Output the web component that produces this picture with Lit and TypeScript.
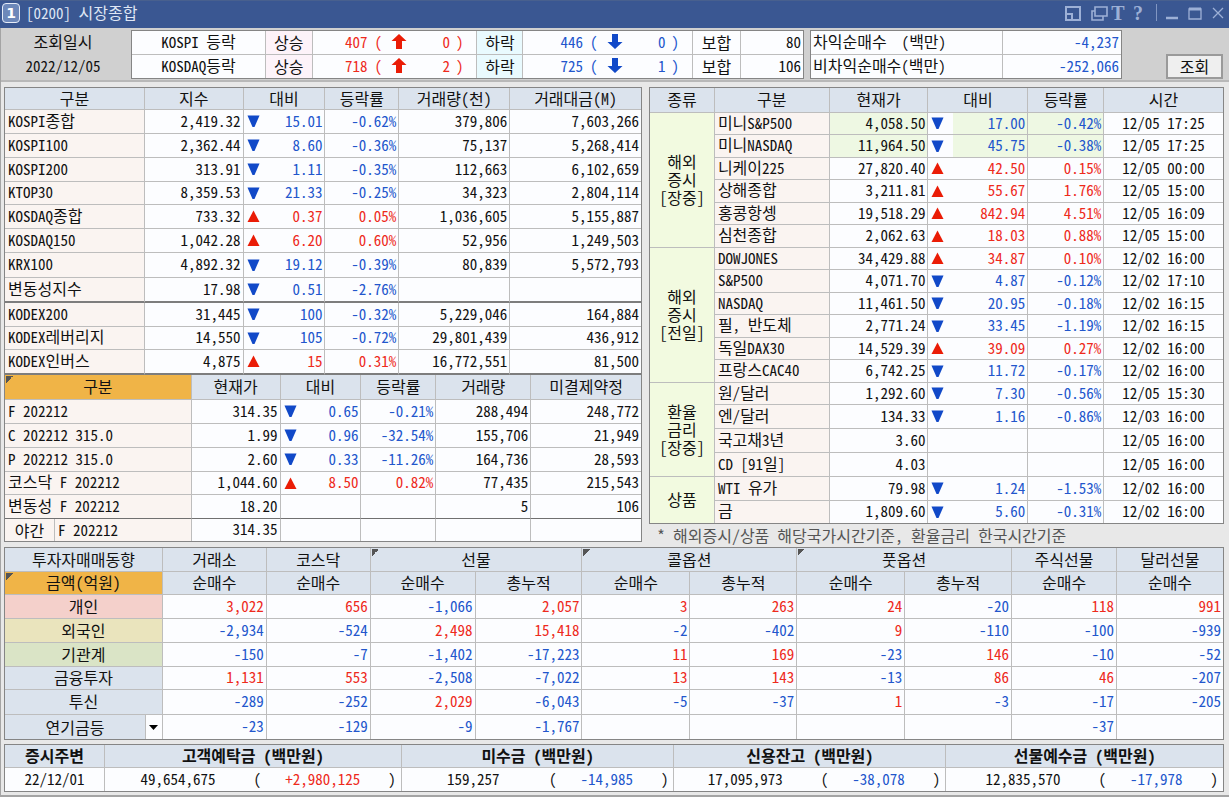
import { LitElement, html, css, svg, nothing } from "lit";
import { customElement, state } from "lit/decorators.js";

type Quote = {
  name: string;
  price: string;
  change?: string;
  rate?: string;
  dir?: "up" | "down";
  extra: string[];
  row: string;
};

const q = (
  row: string,
  name: string,
  price: string,
  dir: "" | "up" | "down",
  change: string,
  rate: string,
  ...extra: string[]
): Quote => ({ row, name, price, dir: dir || undefined, change, rate, extra });

const INDICES: Quote[] = [
  q("h24", "KOSPI종합", "2,419.32", "down", "15.01", "-0.62%", "379,806", "7,603,266"),
  q("h24", "KOSPI100", "2,362.44", "down", "8.60", "-0.36%", "75,137", "5,268,414"),
  q("h24", "KOSPI200", "313.91", "down", "1.11", "-0.35%", "112,663", "6,102,659"),
  q("h23", "KTOP30", "8,359.53", "down", "21.33", "-0.25%", "34,323", "2,804,114"),
  q("h24", "KOSDAQ종합", "733.32", "up", "0.37", "0.05%", "1,036,605", "5,155,887"),
  q("h24", "KOSDAQ150", "1,042.28", "up", "6.20", "0.60%", "52,956", "1,249,503"),
  q("h25", "KRX100", "4,892.32", "down", "19.12", "-0.39%", "80,839", "5,572,793"),
  q("h25 thick", "변동성지수", "17.98", "down", "0.51", "-2.76%", "", ""),
  q("h24", "KODEX200", "31,445", "down", "100", "-0.32%", "5,229,046", "164,884"),
  q("h23", "KODEX레버리지", "14,550", "down", "105", "-0.72%", "29,801,439", "436,912"),
  q("h25 thick", "KODEX인버스", "4,875", "up", "15", "0.31%", "16,772,551", "81,500"),
];

const FUTURES: Quote[] = [
  q("h24", "F 202212", "314.35", "down", "0.65", "-0.21%", "288,494", "248,772"),
  q("h24", "C 202212 315.0", "1.99", "down", "0.96", "-32.54%", "155,706", "21,949"),
  q("h24", "P 202212 315.0", "2.60", "down", "0.33", "-11.26%", "164,736", "28,593"),
  q("h23", "코스닥 F 202212", "1,044.60", "up", "8.50", "0.82%", "77,435", "215,543"),
  q("h24 dark", "변동성 F 202212", "18.20", "", "", "", "5", "106"),
];

const WORLD: { title: string[]; rows: Quote[] }[] = [
  {
    title: ["해외", "증시", "[장중]"],
    rows: [
      q("h22 lit", "미니S&P500", "4,058.50", "down", "17.00", "-0.42%", "12/05 17:25"),
      q("h23 lit", "미니NASDAQ", "11,964.50", "down", "45.75", "-0.38%", "12/05 17:25"),
      q("h22", "니케이225", "27,820.40", "up", "42.50", "0.15%", "12/05 00:00"),
      q("h23", "상해종합", "3,211.81", "up", "55.67", "1.76%", "12/05 15:00"),
      q("h22", "홍콩항셍", "19,518.29", "up", "842.94", "4.51%", "12/05 16:09"),
      q("h23", "심천종합", "2,062.63", "up", "18.03", "0.88%", "12/05 15:00"),
    ],
  },
  {
    title: ["해외", "증시", "[전일]"],
    rows: [
      q("h22", "DOWJONES", "34,429.88", "up", "34.87", "0.10%", "12/02 16:00"),
      q("h23", "S&P500", "4,071.70", "down", "4.87", "-0.12%", "12/02 17:10"),
      q("h22", "NASDAQ", "11,461.50", "down", "20.95", "-0.18%", "12/02 16:15"),
      q("h23", "필, 반도체", "2,771.24", "down", "33.45", "-1.19%", "12/02 16:15"),
      q("h22", "독일DAX30", "14,529.39", "up", "39.09", "0.27%", "12/02 16:00"),
      q("h23", "프랑스CAC40", "6,742.25", "down", "11.72", "-0.17%", "12/02 16:00"),
    ],
  },
  {
    title: ["환율", "금리", "[장중]"],
    rows: [
      q("h22", "원/달러", "1,292.60", "down", "7.30", "-0.56%", "12/05 15:30"),
      q("h24", "엔/달러", "134.33", "down", "1.16", "-0.86%", "12/03 16:00"),
      q("h24", "국고채3년", "3.60", "", "", "", "12/05 16:00"),
      q("h24", "CD [91일]", "4.03", "", "", "", "12/05 16:00"),
    ],
  },
  {
    title: ["상품"],
    rows: [
      q("h24", "WTI 유가", "79.98", "down", "1.24", "-1.53%", "12/02 16:00"),
      q("h22", "금", "1,809.60", "down", "5.60", "-0.31%", "12/02 16:00"),
    ],
  },
];

const INVESTORS: { name: string; tone: string; row: string; values: string[] }[] = [
  { name: "개인", tone: "rose", row: "h24", values: ["3,022", "656", "-1,066", "2,057", "3", "263", "24", "-20", "118", "991"] },
  { name: "외국인", tone: "sand", row: "h24", values: ["-2,934", "-524", "2,498", "15,418", "-2", "-402", "9", "-110", "-100", "-939"] },
  { name: "기관계", tone: "sage", row: "h24", values: ["-150", "-7", "-1,402", "-17,223", "11", "169", "-23", "146", "-10", "-52"] },
  { name: "금융투자", tone: "head", row: "h23", values: ["1,131", "553", "-2,508", "-7,022", "13", "143", "-13", "86", "46", "-207"] },
  { name: "투신", tone: "head", row: "h25", values: ["-289", "-252", "2,029", "-6,043", "-5", "-37", "1", "-3", "-17", "-205"] },
];
const PENSION = ["-23", "-129", "-9", "-1,767", "", "", "", "", "-37", ""];

const FUNDS = [
  { title: "고객예탁금 (백만원)", total: "49,654,675", diff: "+2,980,125" },
  { title: "미수금 (백만원)", total: "159,257", diff: "-14,985" },
  { title: "신용잔고 (백만원)", total: "17,095,973", diff: "-38,078" },
  { title: "선물예수금 (백만원)", total: "12,835,570", diff: "-17,978" },
];

const BREADTH = [
  { name: "KOSPI 등락", up: "407", top: "0", down: "446", bottom: "0", flat: "80" },
  { name: "KOSDAQ등락", up: "718", top: "2", down: "725", bottom: "1", flat: "106" },
];

const cols = (widths: number[]) => {
  const total = widths.reduce((a, b) => a + b, 0);
  return html`<colgroup>
    ${widths.map((w) => html`<col style="width:${(w / total) * 100}%" />`)}
  </colgroup>`;
};

const tone = (v: string) => (v === "" ? "" : v.startsWith("-") ? "blue" : "red");

/* Hangul runs are set one step larger than the half-width Latin around them. */
const mixed = (text: string) =>
  text.split(/([가-힣]+)/).map((part, i) => (i % 2 ? html`<span class="ko">${part}</span>` : part));

const triangle = (dir?: string) =>
  dir
    ? html`<svg class="tri" viewBox="0 0 13 12" aria-hidden="true">
        ${dir === "up"
          ? svg`<path fill="#ea1c06" d="M6.5 0.5 12.5 12H0.5z" />`
          : svg`<path fill="#1149c8" d="M0.5 0.5H12.5L7.5 12H5.5z" />`}
      </svg>`
    : nothing;

const blockArrow = (dir: "up" | "down") => html`<svg class="block" viewBox="0 0 16 15" aria-hidden="true">
  ${dir === "up"
    ? svg`<path fill="#ea1c06" d="M8 0 15.5 7H11V15H5V7H0.500z" />`
    : svg`<path fill="#1149c8" d="M8 15 15.500 8H11V0H5V8H0.500z" />`}
</svg>`;

@customElement("app-root")
export class AppRoot extends LitElement {
  @state() private group = "연기금등";

  static styles = css`
    :host {
      display: block;
      min-height: 100vh;
      box-sizing: border-box;
      background: #e8e8e8;
      border-left: 1px solid #a4a4a4;
      border-bottom: 2px solid #a4a4a4;
      color: #111;
      font-family: "Noto Sans Mono CJK KR", "Noto Sans CJK KR", "Liberation Mono", monospace;
      font-feature-settings: "hwid";
      font-size: 15px;
      line-height: 18px;
    }
    * { box-sizing: border-box; }
    button, select { font: inherit; font-feature-settings: inherit; color: inherit; }
    .ko, thead, .kind, .who { font-size: 16px; }
    th > span.ko, td > span.ko { line-height: 0; }

    .title {
      display: flex;
      align-items: center;
      height: 28px;
      margin-left: -1px;
      padding: 0 0 4px 2px;
      background: #3a5792;
      border-top: 1px solid #48608e;
      color: #dfe6f4;
    }
    .title h1 { margin: 0 auto 0 6px; font-size: 15px; font-weight: 400; }
    .badge {
      display: grid;
      place-items: center;
      width: 18px;
      height: 20px;
      border: 1px solid #e6ecf8;
      border-radius: 4px;
      background: #6d88ba;
      color: #fff;
      font: bold 14px "DejaVu Sans", sans-serif;
    }
    .tools { display: flex; align-items: center; color: #9db0d6; }
    .tools button {
      display: grid;
      place-items: center;
      width: 23px;
      height: 22px;
      padding: 0;
      border: 0;
      background: none;
    }
    .tools .pop { width: 18px; }
    .tools .pop + .pop { margin-left: 8px; }
    .tools svg { width: 18px; height: 18px; fill: none; stroke: currentColor; stroke-width: 2; }
    .tools .glyph { width: 20px; font: bold 20px/18px "Liberation Serif", serif; }
    .tools .rule { width: 1px; height: 17px; margin: 0 3px 0 8px; background: #8196c2; }

    .query {
      display: grid;
      grid-template-columns: 124fr 673fr 312fr 95fr;
      column-gap: 6px;
      padding: 2px 6px 1px 0;
      background: #d0d0d0;
      border-bottom: 2px solid #b8b8b8;
    }
    .when {
      display: flex;
      flex-direction: column;
      justify-content: space-around;
      text-align: center;
      line-height: 23px;
      margin: 0;
      padding-bottom: 2px;
    }
    .go {
      align-self: end;
      justify-self: end;
      width: 57px;
      height: 25px;
      padding: 0 0 2px;
      border: 2px solid #9a9a9a;
      background: #efefef;
      color: #111;
    }

    .panel { border: 1px solid #858585; background: #fcfdff; }
    table { width: 100%; table-layout: fixed; border-collapse: separate; border-spacing: 0; }
    th, td {
      padding: 0 2px 2px;
      border-right: 1px solid #bdbdbd;
      border-bottom: 1px solid #bdbdbd;
      font-weight: 400;
      white-space: nowrap;
    }
    tr > :last-child { border-right: 0; }
    .last > *, .spanlast { border-bottom: 0; }
    .thick > * { border-bottom: 2px solid #7d7d7d; }
    .dark > * { border-bottom-color: #707070; }
    .h22 { height: 22px; }
    .h23 { height: 23px; }
    .h24 { height: 24px; }
    .h25 { height: 25px; }
    .num { text-align: right; }
    .mid { text-align: center; }
    .keep { white-space: pre; }
    .red { color: #ee2a1c; }
    .blue { color: #2256cc; }
    thead th, .head { background: #dbe3ed; }
    .name { padding-left: 3px; background: #faf4f1; text-align: left; }
    .tricell { border-right: 0; padding-left: 3px; padding-bottom: 1px; }
    .tri { display: block; width: 13px; height: 12px; }
    thead .pick { background-color: #f0b447; }
    .mark {
      background-image: linear-gradient(135deg, #555 50%, transparent 50%);
      background-size: 7px 7px;
      background-position: 1px 1px;
      background-repeat: no-repeat;
    }
    .kind { background: #f2fae0; text-align: center; white-space: pre-line; }
    .lit .num { background: #eef8e3; }
    .rise { background: #fdf3f9; text-align: center; }
    .fall { background: #e9fafe; text-align: center; }
    .rose { background: #f4d0cb; }
    .sand { background: #eae4bd; }
    .sage { background: #dae4c6; }

    .count { display: flex; justify-content: flex-end; align-items: center; padding-right: 11px; }
    .count .gap { margin-left: 7px; }
    .block { width: 16px; height: 15px; margin-left: 9px; }
    .count .limit { width: 43px; text-align: right; margin-right: 6px; }

    .boards {
      display: grid;
      grid-template-columns: minmax(0, 638fr) minmax(0, 575fr);
      column-gap: 7px;
      align-items: start;
      padding: 5px 5px 2px 3px;
    }
    .night { display: grid; grid-template-columns: 50px 1fr; align-items: stretch; line-height: 22px; }
    .night span:first-child { text-align: center; border-right: 1px solid #bdbdbd; }
    .night span:last-child { padding-left: 3px; }
    .night-cell { padding: 0; }
    .note { margin: 2px 0 1px 8px; color: #555; font-size: 16px; }
    .wide { margin: 0 5px 4px 3px; }
    .combo-cell { padding: 0; }
    .combo { display: grid; grid-template-columns: 1fr 17px; height: 24px; }
    .combo select {
      grid-area: 1 / 1 / 2 / 3;
      appearance: none;
      border: 0;
      border-radius: 0;
      padding: 0 17px 0 0;
      background: none;
      text-align: center;
      text-align-last: center;
    }
    .combo span {
      grid-area: 1 / 2;
      display: grid;
      place-items: center;
      background: #fcfdff;
      border-left: 1px solid #bdbdbd;
      pointer-events: none;
    }
    .combo svg { width: 9px; height: 5px; }
    .funds { margin-bottom: 3px; }
    .funds th { font-weight: 700; }
    .fund { display: flex; justify-content: flex-end; padding-right: 3px; }
    .fund .total { width: 75px; text-align: center; }
    .fund .open { margin: 0 24px 0 38px; }
    .fund .close { margin-left: 28px; }
  `;

  private cells(r: Quote, extraClass = "num") {
    return html`
      <td class="num">${r.price}</td>
      <td class="tricell">${triangle(r.dir)}</td>
      <td class="num ${r.dir === "up" ? "red" : "blue"}">${r.change}</td>
      <td class="num ${r.dir === "up" ? "red" : "blue"}">${r.rate}</td>
      ${r.extra.map((e) => html`<td class=${extraClass}>${e}</td>`)}
    `;
  }

  private count(color: string, n: string, dir: "up" | "down", limit: string) {
    return html`<td class=${color}>
      <div class="count"><span>${n}</span><span class="gap">(</span>${blockArrow(dir)}<span class="limit">${limit}</span><span>)</span></div>
    </td>`;
  }

  private titleBar() {
    return html`<header class="title">
      <span class="badge">1</span>
      <h1>${mixed("[0200] 시장종합")}</h1>
      <div class="tools">
        <button class="pop" aria-label="축소">
          <svg viewBox="0 0 18 18"><path d="M2 3H16V16H2zM2 10H8V16" /></svg>
        </button>
        <button class="pop" aria-label="복제">
          <svg viewBox="0 0 18 18"><path d="M5 3H17V12H5zM5 7H2V16H13V12" stroke-width="1.600" /></svg>
        </button>
        <button class="glyph">T</button>
        <button class="glyph">?</button>
        <span class="rule"></span>
        <button aria-label="최소화">
          <svg viewBox="0 0 18 18"><path d="M3 14H15" stroke-width="2.500" /></svg>
        </button>
        <button aria-label="최대화">
          <svg viewBox="0 0 18 18"><path d="M3 5H15V15H3z" stroke-width="1.300" /><path d="M3 5H15" stroke-width="3" /></svg>
        </button>
        <button aria-label="닫기">
          <svg viewBox="0 0 18 18"><path d="M4 4 14 14M14 4 4 14" stroke-width="1.300" /></svg>
        </button>
      </div>
    </header>`;
  }

  private query() {
    return html`<section class="query">
      <p class="when"><span class="ko">조회일시</span><span>2022/12/05</span></p>
      <div class="panel">
        <table>
          ${cols([134, 47, 165, 46, 170, 48, 62])}
          <tbody>
            ${BREADTH.map(
              (b, i) => html`<tr class=${i ? "h23 last" : "h24"}>
                <th class="mid" scope="row">${mixed(b.name)}</th>
                <td class="rise ko">상승</td>
                ${this.count("red", b.up, "up", b.top)}
                <td class="fall ko">하락</td>
                ${this.count("blue", b.down, "down", b.bottom)}
                <td class="mid ko">보합</td>
                <td class="num">${b.flat}</td>
              </tr>`
            )}
          </tbody>
        </table>
      </div>
      <div class="panel">
        <table>
          ${cols([193, 118])}
          <tbody>
            <tr class="h24"><td class="keep">${mixed("차익순매수  (백만)")}</td><td class="num blue">-4,237</td></tr>
            <tr class="h23 last"><td>${mixed("비차익순매수(백만)")}</td><td class="num blue">-252,066</td></tr>
          </tbody>
        </table>
      </div>
      <button class="go ko">조회</button>
    </section>`;
  }

  private domestic() {
    return html`<div class="panel">
      <table>
        ${cols([140, 99, 20, 62, 74, 111, 131])}
        <thead>
          <tr class="h22">
            <th>구분</th><th>지수</th><th colspan="2">대비</th><th>등락률</th><th>거래량(천)</th><th>거래대금(M)</th>
          </tr>
        </thead>
        <tbody>
          ${INDICES.map((r) => html`<tr class=${r.row}><th class="name" scope="row">${mixed(r.name)}</th>${this.cells(r)}</tr>`)}
        </tbody>
      </table>
      <table>
        ${cols([187, 89, 20, 61, 75, 95, 110])}
        <thead>
          <tr class="h25">
            <th class="pick mark">구분</th><th>현재가</th><th colspan="2">대비</th><th>등락률</th><th>거래량</th><th>미결제약정</th>
          </tr>
        </thead>
        <tbody>
          ${FUTURES.map((r) => html`<tr class=${r.row}><th class="name" scope="row">${mixed(r.name)}</th>${this.cells(r)}</tr>`)}
          <tr class="h22 last">
            <th class="name night-cell" scope="row"><div class="night"><span class="ko">야간</span><span>F 202212</span></div></th>
            ${this.cells(q("", "", "314.35", "", "", "", "", ""))}
          </tr>
        </tbody>
      </table>
    </div>`;
  }

  private world() {
    return html`<div>
      <div class="panel">
        <table>
          ${cols([65, 115, 99, 25, 75, 76, 119])}
          <thead>
            <tr class="h25">
              <th>종류</th><th>구분</th><th>현재가</th><th colspan="2">대비</th><th>등락률</th><th>시간</th>
            </tr>
          </thead>
          <tbody>
            ${WORLD.map((g, gi) =>
              g.rows.map((r, i) => {
                const end = gi === WORLD.length - 1;
                return html`<tr class="${r.row} ${end && i === g.rows.length - 1 ? "last" : ""}">
                  ${i === 0
                    ? html`<th class="kind ${end ? "spanlast" : ""}" scope="rowgroup" rowspan=${g.rows.length}>${g.title.join("\n")}</th>`
                    : nothing}
                  <th class="name" scope="row">${mixed(r.name)}</th>
                  ${this.cells(r, "mid")}
                </tr>`;
              })
            )}
          </tbody>
        </table>
      </div>
      <p class="note">* 해외증시/상품 해당국가시간기준, 환율금리 한국시간기준</p>
    </div>`;
  }

  private investors() {
    const value = (v: string) => html`<td class="num ${tone(v)}">${v}</td>`;
    return html`<div class="panel wide">
      <table>
        ${cols([158, 104, 104, 105, 107, 108, 107, 108, 107, 105, 106])}
        <thead>
          <tr class="h24">
            <th>투자자매매동향</th><th>거래소</th><th>코스닥</th>
            <th class="mark" colspan="2">선물</th><th class="mark" colspan="2">콜옵션</th><th class="mark" colspan="2">풋옵션</th>
            <th>주식선물</th><th>달러선물</th>
          </tr>
          <tr class="h23">
            <th class="pick mark">금액(억원)</th><th>순매수</th><th>순매수</th><th>순매수</th><th>총누적</th><th>순매수</th>
            <th>총누적</th><th>순매수</th><th>총누적</th><th>순매수</th><th>순매수</th>
          </tr>
        </thead>
        <tbody>
          ${INVESTORS.map(
            (r) => html`<tr class=${r.row}><th class="who ${r.tone}" scope="row">${r.name}</th>${r.values.map(value)}</tr>`
          )}
          <tr class="h24 last">
            <th class="who head combo-cell" scope="row">
              <div class="combo">
                <select
                  aria-label="투자자 구분"
                  .value=${this.group}
                  @change=${(e: Event) => (this.group = (e.target as HTMLSelectElement).value)}
                >
                  <option>연기금등</option>
                </select>
                <span><svg viewBox="0 0 9 5" aria-hidden="true"><path d="M0 0H9L4.500 5z" /></svg></span>
              </div>
            </th>
            ${PENSION.map(value)}
          </tr>
        </tbody>
      </table>
    </div>`;
  }

  private funds() {
    return html`<div class="panel wide funds">
      <table>
        ${cols([100, 297, 273, 272, 277])}
        <thead>
          <tr class="h23"><th>증시주변</th>${FUNDS.map((f) => html`<th>${f.title}</th>`)}</tr>
        </thead>
        <tbody>
          <tr class="h23 last">
            <td class="mid">22/12/01</td>
            ${FUNDS.map(
              (f) => html`<td>
                <div class="fund"><span class="total">${f.total}</span><span class="open">(</span><span class=${tone(f.diff)}>${f.diff}</span><span class="close">)</span></div>
              </td>`
            )}
          </tr>
        </tbody>
      </table>
    </div>`;
  }

  render() {
    return html`${this.titleBar()}${this.query()}
      <main>
        <section class="boards">${this.domestic()}${this.world()}</section>
        ${this.investors()}${this.funds()}
      </main>`;
  }
}
